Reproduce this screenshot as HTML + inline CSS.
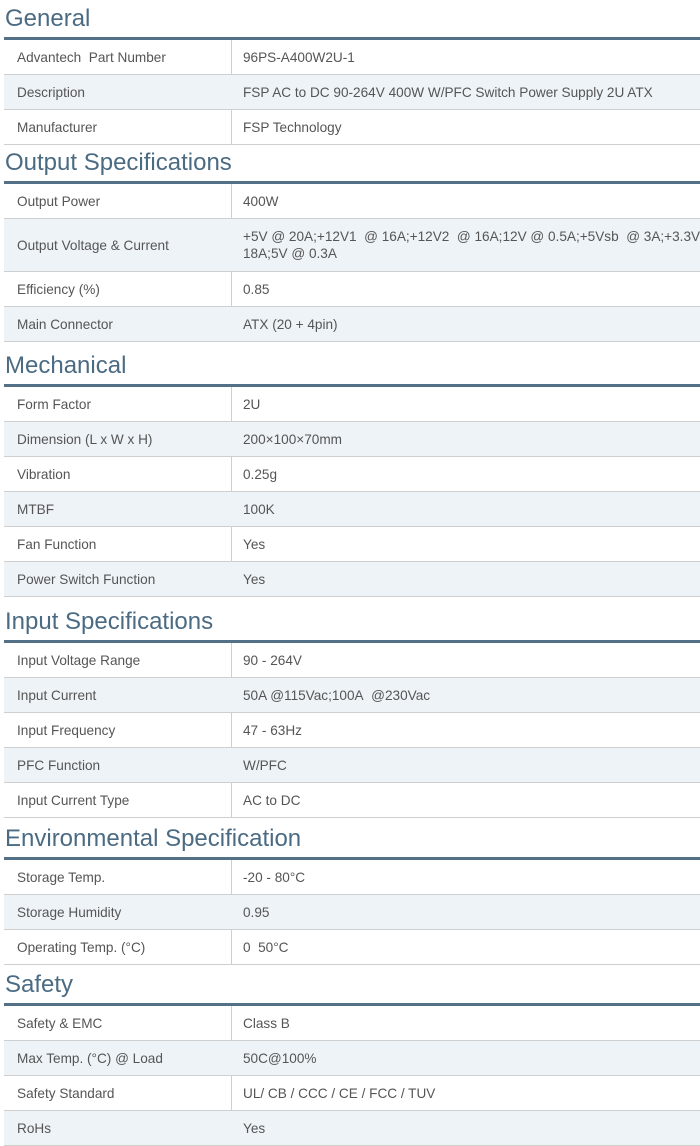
<!DOCTYPE html>
<html><head><meta charset="utf-8"><style>
*{margin:0;padding:0;box-sizing:border-box}
body{width:700px;height:1140px;overflow:hidden;background:#fff;font-family:"Liberation Sans",Arial,sans-serif}
.wrap{position:relative;left:4px;width:720px}
h2{font-weight:normal;font-size:24px;color:#4b6b83;padding-left:1px;position:relative}
h2 span{position:absolute;bottom:4px;left:1px}
.bar{height:3px;background:#527086}
.r{display:flex;height:35px;border-bottom:1px solid #cfcfcf;font-size:13.6px;color:#555}
.r:nth-child(even){background:#eef3f8}
.k{width:228px;border-right:1px solid #cfcfcf;padding-left:13px;display:flex;align-items:center}
.v{flex:1;padding-left:11px;display:flex;align-items:center;line-height:17px}
.r:nth-child(even) .k{border-right-color:transparent}
</style></head><body><div class="wrap">
<h2 style="height:37px"><span>General</span></h2><div class="bar"></div>
<div>
<div class="r"><div class="k">Advantech&nbsp; Part Number</div><div class="v">96PS-A400W2U-1</div></div>
<div class="r"><div class="k">Description</div><div class="v">FSP AC to DC 90-264V 400W W/PFC Switch Power Supply 2U ATX</div></div>
<div class="r"><div class="k">Manufacturer</div><div class="v">FSP Technology</div></div>
</div>
<h2 style="height:36px"><span>Output Specifications</span></h2><div class="bar"></div>
<div>
<div class="r"><div class="k">Output Power</div><div class="v">400W</div></div>
<div class="r" style="height:53px"><div class="k">Output Voltage &amp; Current</div><div class="v" style="width:490px;flex:none">+5V @ 20A;+12V1&nbsp; @ 16A;+12V2&nbsp; @ 16A;12V @ 0.5A;+5Vsb&nbsp; @ 3A;+3.3V @ 18A;5V @ 0.3A</div></div>
<div class="r"><div class="k">Efficiency (%)</div><div class="v">0.85</div></div>
<div class="r"><div class="k">Main Connector</div><div class="v">ATX (20 + 4pin)</div></div>
</div>
<h2 style="height:42px"><span>Mechanical</span></h2><div class="bar"></div>
<div>
<div class="r"><div class="k">Form Factor</div><div class="v">2U</div></div>
<div class="r"><div class="k">Dimension (L x W x H)</div><div class="v">200×100×70mm</div></div>
<div class="r"><div class="k">Vibration</div><div class="v">0.25g</div></div>
<div class="r"><div class="k">MTBF</div><div class="v">100K</div></div>
<div class="r"><div class="k">Fan Function</div><div class="v">Yes</div></div>
<div class="r"><div class="k">Power Switch Function</div><div class="v">Yes</div></div>
</div>
<h2 style="height:43px"><span>Input Specifications</span></h2><div class="bar"></div>
<div>
<div class="r"><div class="k">Input Voltage Range</div><div class="v">90 - 264V</div></div>
<div class="r"><div class="k">Input Current</div><div class="v">50A @115Vac;100A&nbsp; @230Vac</div></div>
<div class="r"><div class="k">Input Frequency</div><div class="v">47 - 63Hz</div></div>
<div class="r"><div class="k">PFC Function</div><div class="v">W/PFC</div></div>
<div class="r"><div class="k">Input Current Type</div><div class="v">AC to DC</div></div>
</div>
<h2 style="height:39px"><span>Environmental Specification</span></h2><div class="bar"></div>
<div>
<div class="r"><div class="k">Storage Temp.</div><div class="v">-20 - 80°C</div></div>
<div class="r"><div class="k">Storage Humidity</div><div class="v">0.95</div></div>
<div class="r"><div class="k">Operating Temp. (°C)</div><div class="v">0&nbsp; 50°C</div></div>
</div>
<h2 style="height:38px"><span>Safety</span></h2><div class="bar"></div>
<div>
<div class="r"><div class="k">Safety &amp; EMC</div><div class="v">Class B</div></div>
<div class="r"><div class="k">Max Temp. (°C) @ Load</div><div class="v">50C@100%</div></div>
<div class="r"><div class="k">Safety Standard</div><div class="v">UL/ CB / CCC / CE / FCC / TUV</div></div>
<div class="r"><div class="k">RoHs</div><div class="v">Yes</div></div>
</div>
</div></body></html>
